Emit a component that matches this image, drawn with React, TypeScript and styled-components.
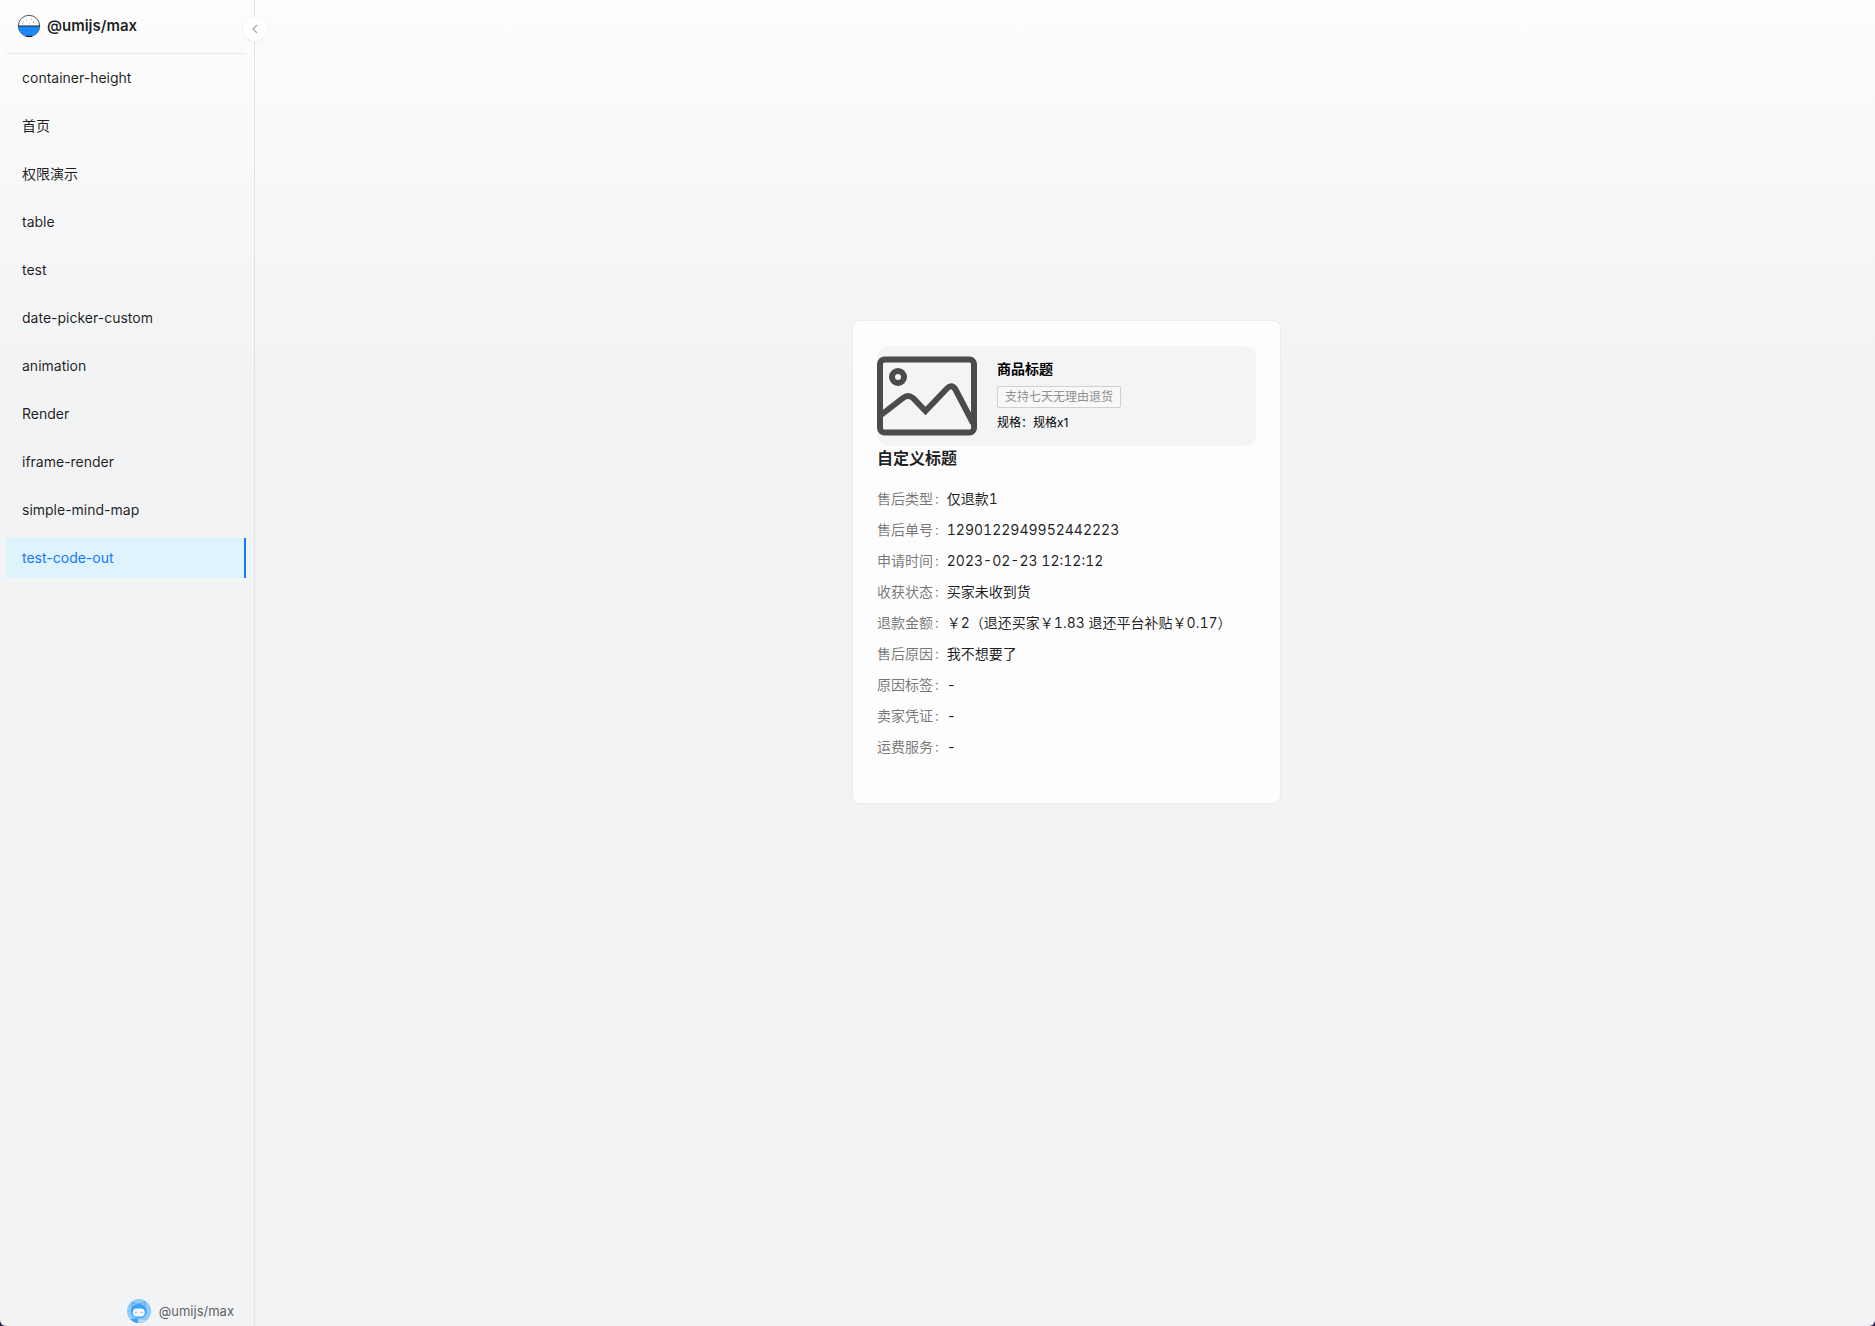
import React from "react";
import styled, { createGlobalStyle } from "styled-components";

const GlobalStyle = createGlobalStyle`
  * { box-sizing: border-box; }
  body {
    margin: 0;
    background: #2b2140;
    color: rgba(0, 0, 0, 0.88);
    font-family: Inter, "Noto Sans CJK SC", sans-serif;
    font-size: 14px;
    line-height: 22px;
  }
`;

const Shell = styled.div`
  display: flex;
  min-height: 100vh;
  overflow: hidden;
  border-radius: 0 0 6px 6px;
  background: linear-gradient(#fdfdfd, #f2f3f5 28%);
`;

const Sidebar = styled.aside`
  position: relative;
  display: flex;
  flex: none;
  flex-direction: column;
  width: 255px;
  padding: 0 8px 3px 6px;
  border-right: 1px solid #e3e4e6;
`;

const Brand = styled.a`
  display: flex;
  align-items: center;
  gap: 6px;
  height: 54px;
  padding: 0 11px 1px;
  border-bottom: 1px solid #e9e9ea;
  color: rgba(0, 0, 0, 0.88);
  font-size: 15px;
  font-weight: 600;
  text-decoration: none;
`;

const CollapseButton = styled.button`
  position: absolute;
  top: 17px;
  right: -13px;
  display: grid;
  place-items: center;
  width: 24px;
  height: 24px;
  padding: 0;
  border: 0;
  border-radius: 50%;
  background: #fff;
  box-shadow: 0 2px 8px -2px rgba(0, 0, 0, 0.06), 0 0 2px rgba(25, 15, 15, 0.05);
  color: #aaa;
  cursor: pointer;
`;

const Menu = styled.ul`
  display: flex;
  flex: 1;
  flex-direction: column;
  gap: 8px;
  margin: 0;
  padding: 4px 0;
  list-style: none;
`;

const MenuLink = styled.a<{ $active: boolean }>`
  display: block;
  padding: 0 16px;
  border-right: 2px solid ${(p) => (p.$active ? "#1677ff" : "transparent")};
  background: ${(p) => (p.$active ? "#dff3fd" : "transparent")};
  color: ${(p) => (p.$active ? "#1677ff" : "rgba(0, 0, 0, 0.88)")};
  line-height: 40px;
  text-decoration: none;
`;

const User = styled.div`
  display: flex;
  align-items: center;
  justify-content: flex-end;
  gap: 8px;
  padding-right: 12px;
  color: rgba(0, 0, 0, 0.65);
  font-size: 13px;
`;

const Main = styled.main`
  display: flex;
  flex: 1;
  align-items: flex-start;
  justify-content: center;
  padding: 320px 0 24px 3px;
`;

const Card = styled.section`
  width: 429px;
  padding: 25px 24px 45px;
  border: 1px solid #ebecee;
  border-radius: 8px;
  background: #fdfdfd;
`;

const Product = styled.div`
  display: flex;
  gap: 20px;
  border-radius: 12px;
  background: #f3f4f6;
`;

const ProductInfo = styled.div`
  display: flex;
  flex-direction: column;
  align-items: flex-start;
  gap: 4px;
  padding-top: 12px;
  color: #000;
  font-size: 12px;
`;

const ProductTitle = styled.strong`
  padding-bottom: 2px;
  font-size: 14px;
  font-weight: 600;
  line-height: 22px;
`;

const Tag = styled.span`
  padding: 0 7px;
  border: 1px solid #d0d0d1;
  border-radius: 2px;
  background: #f8f8f8;
  color: #8f8f8f;
  line-height: 20px;
`;

const Heading = styled.h2`
  margin: 0 0 18px;
  font-size: 16px;
  font-weight: 600;
  line-height: 24px;
`;

const Details = styled.dl`
  display: flex;
  flex-direction: column;
  gap: 9px;
  margin: 0;
  font-variant-numeric: tabular-nums;
`;

const Detail = styled.div`
  display: flex;
`;

const Term = styled.dt`
  color: rgba(0, 0, 0, 0.55);

  &::after {
    content: ":";
    margin: 0 8px 0 2px;
  }
`;

const Value = styled.dd`
  margin: 0;
`;

const Logo = () => (
  <svg width="24" height="24" viewBox="0 0 24 24" aria-hidden="true">
    <circle cx="12" cy="12" r="10.7" fill="#fff" stroke="#555" />
    <path d="M1.3 12h21.4a10.7 10.7 0 0 1-21.4 0Z" fill="#1b86f8" />
    <path d="M1 12h22M9 22.4h6" stroke="#222" strokeWidth="1.2" />
    <path d="M6 8h1m2-2h1m6 2h1m-5 2h1M5 10h1m8-5h1" stroke="#aaa" />
  </svg>
);

const Avatar = () => (
  <svg width="24" height="24" viewBox="0 0 24 24" aria-hidden="true">
    <defs>
      <clipPath id="avatar-clip"><circle cx="12" cy="12" r="12" /></clipPath>
    </defs>
    <g clipPath="url(#avatar-clip)">
      <rect width="24" height="24" fill="#8fcbfa" />
      <path d="M5 8 5.500 3.500 9 5.300 14.500 4.500 17.500 2.500 18.300 7Z" fill="#8fcbfa" stroke="#4a8fd6" strokeWidth=".7" />
      <path d="M4 13c-.5-5 3.200-8 8-8 4.500 0 8 3 7.600 8-.2 3-2.600 6-7.600 6-4.500 0-7.700-2.500-8-6Z" fill="#38a3f8" />
      <rect x="5.800" y="9.500" width="12" height="8" rx="4" fill="#f6f6ff" />
      <path d="m8 14 1.200-1.200L10.400 14m3 0 1.200-1.200 1.200 1.200" fill="none" stroke="#9a97df" strokeWidth=".8" />
      <path d="M3 20c3 0 5-1 8 0v4H3Z" fill="#3d9df1" />
      <path d="M11 20h7l1 4h-8Z" fill="#b8ddfc" stroke="#69aeea" strokeWidth=".6" />
    </g>
  </svg>
);

const Picture = () => (
  <svg width="100" height="100" viewBox="0 0 100 100" role="img" aria-label="商品图片" fill="none" stroke="#4b4b4b" strokeWidth="6">
    <rect x="3" y="13.500" width="94" height="73" rx="4.500" />
    <circle cx="21" cy="31" r="6" />
    <path d="M4 69 26 52q5-4 10 0L48.500 65 70 42.500q5-5 8.500 1L96 77" />
  </svg>
);

const menuItems = [
  "container-height", "首页", "权限演示", "table", "test", "date-picker-custom",
  "animation", "Render", "iframe-render", "simple-mind-map", "test-code-out",
];
const activeItem = "test-code-out";

const details = [
  ["售后类型", "仅退款1"],
  ["售后单号", "1290122949952442223"],
  ["申请时间", "2023-02-23 12:12:12"],
  ["收获状态", "买家未收到货"],
  ["退款金额", "￥2（退还买家￥1.83 退还平台补贴￥0.17）"],
  ["售后原因", "我不想要了"],
  ["原因标签", "-"],
  ["卖家凭证", "-"],
  ["运费服务", "-"],
];

export default function App() {
  return (
    <>
      <GlobalStyle />
      <Shell>
        <Sidebar>
          <Brand href="#"><Logo />@umijs/max</Brand>
          <CollapseButton type="button" aria-label="收起菜单">
            <svg width="12" height="12" viewBox="0 0 12 12" fill="none" stroke="currentColor" strokeWidth="1.300" aria-hidden="true">
              <path d="M8 2 4 6l4 4" />
            </svg>
          </CollapseButton>
          <Menu>
            {menuItems.map((item) => (
              <li key={item}>
                <MenuLink href="#" $active={item === activeItem}>{item}</MenuLink>
              </li>
            ))}
          </Menu>
          <User><Avatar />@umijs/max</User>
        </Sidebar>
        <Main>
          <Card>
            <Product>
              <Picture />
              <ProductInfo>
                <ProductTitle>商品标题</ProductTitle>
                <Tag>支持七天无理由退货</Tag>
                <span>规格：规格x1</span>
              </ProductInfo>
            </Product>
            <Heading>自定义标题</Heading>
            <Details>
              {details.map(([term, value]) => (
                <Detail key={term}>
                  <Term>{term}</Term>
                  <Value>{value}</Value>
                </Detail>
              ))}
            </Details>
          </Card>
        </Main>
      </Shell>
    </>
  );
}
